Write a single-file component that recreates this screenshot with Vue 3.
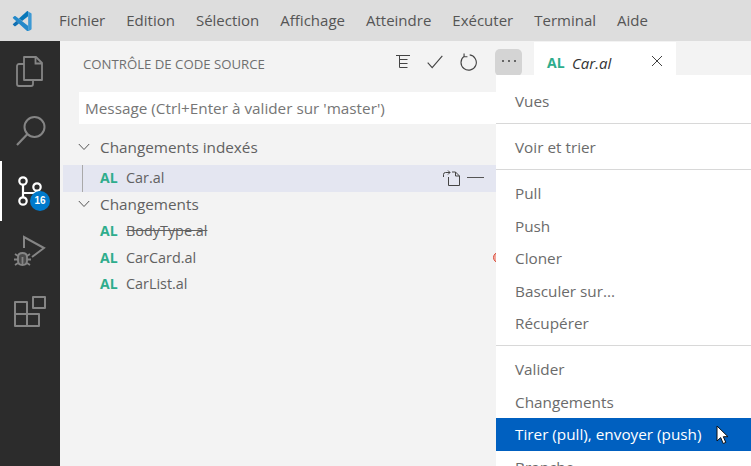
<script setup>
const menuItems = ['Fichier', 'Edition', 'Sélection', 'Affichage', 'Atteindre', 'Exécuter', 'Terminal', 'Aide'];

const stagedFiles = [{ name: 'Car.al' }];
const changedFiles = [
  { name: 'BodyType.al', deleted: true },
  { name: 'CarCard.al' },
  { name: 'CarList.al' },
];

const menuGroups = [
  ['Vues'],
  ['Voir et trier'],
  ['Pull', 'Push', 'Cloner', 'Basculer sur...', 'Récupérer'],
  ['Valider', 'Changements', 'Tirer (pull), envoyer (push)', 'Branche'],
];
const activeItem = 'Tirer (pull), envoyer (push)';
</script>

<template>
  <div class="window">
    <header class="titlebar">
      <svg class="logo" viewBox="0 0 24 24" width="20" height="20">
        <path fill="#2489ca" d="M1.200 8.600s-.6-.4.100-1l1.700-1.500s.5-.5 1 0l15.600 11.800v5.700s0 .9-1.100.8z" />
        <path fill="#1070b3" d="M5.200 12 1.200 15.600s-.4.300 0 .9l1.800 1.700s.5.500 1.100 0l4.200-3.200z" />
        <path fill="#0877b9" d="m12.100 12 7.300-5.600-.1-5.600s-.3-1.200-1.400-.5L8.300 8.900z" />
        <path fill="#3c99d4" d="M18.500 23.900c.4.400 1 .3 1 .3l3.400-1.700c.4-.3.600-.7.600-1.100V3.500c0-.5-.5-.9-.9-1.100L19.700.8c-.7-.4-1.100.1-1.100.1s.500-.4.800.4v21.700c0 .1 0 .3-.1.400-.1.200-.4.500-.8.500z" />
      </svg>
      <nav class="menubar">
        <span v-for="item in menuItems" :key="item">{{ item }}</span>
      </nav>
    </header>

    <div class="workbench">
      <aside class="activitybar">
        <button class="activity">
          <svg viewBox="0 0 32 32" width="32" height="32" fill="none" stroke="#858585" stroke-width="1.800">
            <path d="M10 25V2h12l6 6v17z" stroke-linejoin="round" />
            <path d="M21.500 2v6.500H28" />
            <path d="M10 9H5a2 2 0 0 0-2 2v18a2 2 0 0 0 2 2h12a2 2 0 0 0 2-2v-4" />
          </svg>
        </button>
        <button class="activity">
          <svg viewBox="0 0 32 32" width="32" height="32" fill="none" stroke="#858585" stroke-width="2">
            <circle cx="20.500" cy="12" r="10" />
            <path d="M13.500 19 3 30" stroke-width="2.200" />
          </svg>
        </button>
        <button class="activity active">
          <svg viewBox="0 0 32 32" width="32" height="32" fill="none" stroke="#fff" stroke-width="2.200">
            <circle cx="9" cy="6" r="3.700" />
            <circle cx="9" cy="26" r="3.700" />
            <circle cx="23" cy="12" r="3.700" />
            <path d="M9 10v12M9 18h10a4 4 0 0 0 4-2.300" />
          </svg>
          <span class="badge">16</span>
        </button>
        <button class="activity">
          <svg viewBox="0 0 32 32" width="32" height="32" fill="none" stroke="#858585" stroke-width="2">
            <path d="M10 13V2l20 11-12 9" />
            <path stroke-width="1.800" fill="#858585" fill-opacity=".35" d="M4 22c0-2.500 2-4 4.500-4s4.500 1.500 4.500 4v4c0 2.500-2 4-4.500 4S4 28.500 4 26z" />
            <path stroke-width="1.800" d="M4 21l-3-2M13 21l3-2M4 24.500H0M13 24.500h4M4 28l-3 2M13 28l3 2M8.500 22v8" />
          </svg>
        </button>
        <button class="activity">
          <svg viewBox="0 0 32 32" width="32" height="32" fill="none" stroke="#858585" stroke-width="2" stroke-linejoin="round">
            <path d="M1 7h12v24H1zM1 19h24v12H13" />
            <path d="M19 2h12v11H19z" />
          </svg>
        </button>
      </aside>

      <section class="sidebar">
        <div class="sidebar-title">
          <h2>CONTRÔLE DE CODE SOURCE</h2>
          <div class="actions">
            <svg viewBox="0 0 16 16" width="16" height="16" fill="none" stroke="#444" stroke-width="1">
              <path d="M1 1.500h14M4.500 1.500v12M4.500 5.500h8M4.500 9.500h8M4.500 13.500h8" />
            </svg>
            <svg viewBox="0 0 16 16" width="18" height="18" fill="none" stroke="#444" stroke-width="1">
              <path d="m1.500 8.500 4 4.500 9-10.500" />
            </svg>
            <svg viewBox="0 0 16 16" width="18" height="18" fill="none" stroke="#444" stroke-width="1">
              <path d="M4.500 3a6.800 6.800 0 1 0 5-1.300M4.500 .5v2.800h3" />
            </svg>
            <button class="more">
              <svg viewBox="0 0 16 4" width="16" height="4" fill="#424242">
                <circle cx="2" cy="2" r="1" />
                <circle cx="8" cy="2" r="1" />
                <circle cx="14" cy="2" r="1" />
              </svg>
            </button>
          </div>
        </div>

        <div class="message">Message (Ctrl+Enter à valider sur 'master')</div>

        <div class="group staged">
          <svg class="chevron" viewBox="0 0 12 8" width="12" height="8" fill="none" stroke="#555" stroke-width="1">
            <path d="m.800 1 5.200 5.500L11.200 1" />
          </svg>
          Changements indexés
        </div>
        <div v-for="file in stagedFiles" :key="file.name" class="file selected">
          <span class="guide"></span>
          <b class="lang">AL</b>
          <span>{{ file.name }}</span>
          <span class="file-actions">
            <svg viewBox="0 0 18 18" width="18" height="18" fill="none" stroke="#444" stroke-width="1">
              <path d="M6.500 8v8.500h11V7l-4-4h-3.500M13.500 3v4h4" />
              <path d="M1.500 8V5.500a2 2 0 0 1 2-2H8M6 1.500l2 2-2 2" />
            </svg>
            <i class="minus"></i>
          </span>
        </div>
        <div class="group">
          <svg class="chevron" viewBox="0 0 12 8" width="12" height="8" fill="none" stroke="#555" stroke-width="1">
            <path d="m.800 1 5.200 5.500L11.200 1" />
          </svg>
          Changements
        </div>
        <div v-for="file in changedFiles" :key="file.name" class="file">
          <b class="lang">AL</b>
          <span :class="{ deleted: file.deleted }">{{ file.name }}</span>
        </div>
        <span class="error-dot"></span>
      </section>

      <main class="editor">
        <div class="tabs">
          <div class="tab">
            <b class="lang">AL</b>
            <em>Car.al</em>
            <svg viewBox="0 0 12 12" width="12" height="12" fill="none" stroke="#424242" stroke-width="1">
              <path d="m1 1 10 10M11 1 1 11" />
            </svg>
          </div>
        </div>
      </main>

      <div class="context-menu">
        <div v-for="(group, i) in menuGroups" :key="i" class="menu-group">
          <div
            v-for="item in group"
            :key="item"
            class="menu-item"
            :class="{ active: item === activeItem }"
          >
            {{ item }}
          </div>
        </div>
      </div>

      <svg class="cursor" viewBox="0 0 14 20" width="14" height="20">
        <path fill="#fff" stroke="#111" stroke-width="1" d="M1 1v15l3.700-3.400 2.500 5.900 2.600-1.100-2.500-5.700H12z" />
      </svg>
    </div>
  </div>
</template>

<style>
html,
body {
  margin: 0;
  overflow: hidden;
}
</style>

<style scoped>
.window {
  width: 751px;
  height: 466px;
  overflow: hidden;
  display: flex;
  flex-direction: column;
  font-family: "Open Sans", "Noto Sans", sans-serif;
  color: #616161;
  background: #f3f3f3;
}

.titlebar {
  height: 41px;
  flex: none;
  display: flex;
  align-items: center;
  background: #dddddd;
}

.logo {
  margin-left: 12px;
}

.menubar {
  display: flex;
  gap: 21px;
  margin-left: 27px;
  padding-bottom: 1px;
  font-size: 15px;
  color: #555;
}

.workbench {
  position: relative;
  flex: 1;
  display: flex;
  min-height: 0;
}

.activitybar {
  width: 60px;
  flex: none;
  background: #2c2c2c;
  display: flex;
  flex-direction: column;
}

.activity {
  position: relative;
  height: 60px;
  padding: 0;
  border: 0;
  background: none;
  display: flex;
  align-items: center;
  justify-content: center;
}

.activity.active {
  border-left: 2px solid #fff;
  padding-right: 2px;
}

.badge {
  position: absolute;
  left: 28px;
  top: 30px;
  width: 20px;
  height: 20px;
  border-radius: 50%;
  background: #007acc;
  color: #fff;
  font-size: 10px;
  font-weight: 700;
  line-height: 20px;
  text-align: center;
}

.sidebar {
  position: relative;
  width: 474px;
  flex: none;
  padding-left: 3px;
  box-sizing: border-box;
  background: #f3f3f3;
}

.sidebar-title {
  height: 51px;
  box-sizing: border-box;
  display: flex;
  align-items: center;
  justify-content: space-between;
  padding: 0 12px 9px 20px;
}

.sidebar-title h2 {
  margin: 3px 0 0;
  font-size: 13.200px;
  font-weight: 400;
  color: #6f6f6f;
}

.actions {
  display: flex;
  align-items: center;
  gap: 15px;
}

.more {
  width: 27px;
  height: 27px;
  margin-left: 3px;
  padding: 0 0 2px;
  border: 0;
  border-radius: 5px;
  background: #d4d4d4;
  display: flex;
  align-items: center;
  justify-content: center;
}

.message {
  height: 32px;
  margin-left: 16px;
  padding-left: 6px;
  background: #fff;
  color: #767676;
  font-size: 15.300px;
  line-height: 32px;
}

.group {
  height: 26.500px;
  padding: 0 0 1px 15px;
  box-sizing: border-box;
  display: flex;
  align-items: center;
  gap: 10px;
  font-size: 15.300px;
  color: #616161;
}

.group.staged {
  margin: 10px 0 4.500px;
}

.file {
  position: relative;
  height: 26.500px;
  padding: 0 0 1px 37px;
  box-sizing: border-box;
  display: flex;
  align-items: center;
  font-size: 14.400px;
}

.file.selected {
  background: #e4e6f1;
}

.guide {
  position: absolute;
  left: 19px;
  top: 0;
  bottom: 0;
  border-left: 1px solid #a9a9a9;
}

.lang {
  width: 26px;
  flex: none;
  color: #2ead8c;
  font-size: 14px;
  font-weight: 700;
}

.deleted {
  text-decoration: line-through;
}

.file-actions {
  margin-left: auto;
  margin-right: 50px;
  display: flex;
  align-items: center;
  gap: 7px;
}

.minus {
  width: 17px;
  border-top: 1.500px solid #555;
}

.error-dot {
  position: absolute;
  left: 433px;
  top: 211px;
  width: 9px;
  height: 9px;
  border: 1px solid #d9503f;
  border-radius: 50%;
  background: #f2a99f;
}

.editor {
  flex: 1;
  min-width: 0;
}

.tabs {
  height: 34px;
  display: flex;
  background: #f3f3f3;
}

.tab {
  width: 142px;
  height: 34px;
  margin-top: 1px;
  box-sizing: border-box;
  padding: 7px 13px 0;
  display: flex;
  align-items: center;
  background: #fff;
}

.tab .lang {
  width: 25px;
}

.tab em {
  flex: 1;
  font-size: 15px;
  color: #333;
}

.tab svg {
  margin-top: -4px;
}

.context-menu {
  position: absolute;
  left: 496px;
  top: 34px;
  width: 255px;
  padding-top: 10px;
  background: #fff;
}

.menu-group + .menu-group {
  margin-top: 5.500px;
  padding-top: 7px;
  border-top: 1px solid #d8d8d8;
}

.menu-item {
  height: 32.500px;
  padding-left: 19px;
  font-size: 15.300px;
  line-height: 32px;
  color: #6b6b6b;
}

.menu-item.active {
  background: #0060c0;
  color: #fff;
}

.cursor {
  position: absolute;
  left: 716px;
  top: 384px;
}
</style>
